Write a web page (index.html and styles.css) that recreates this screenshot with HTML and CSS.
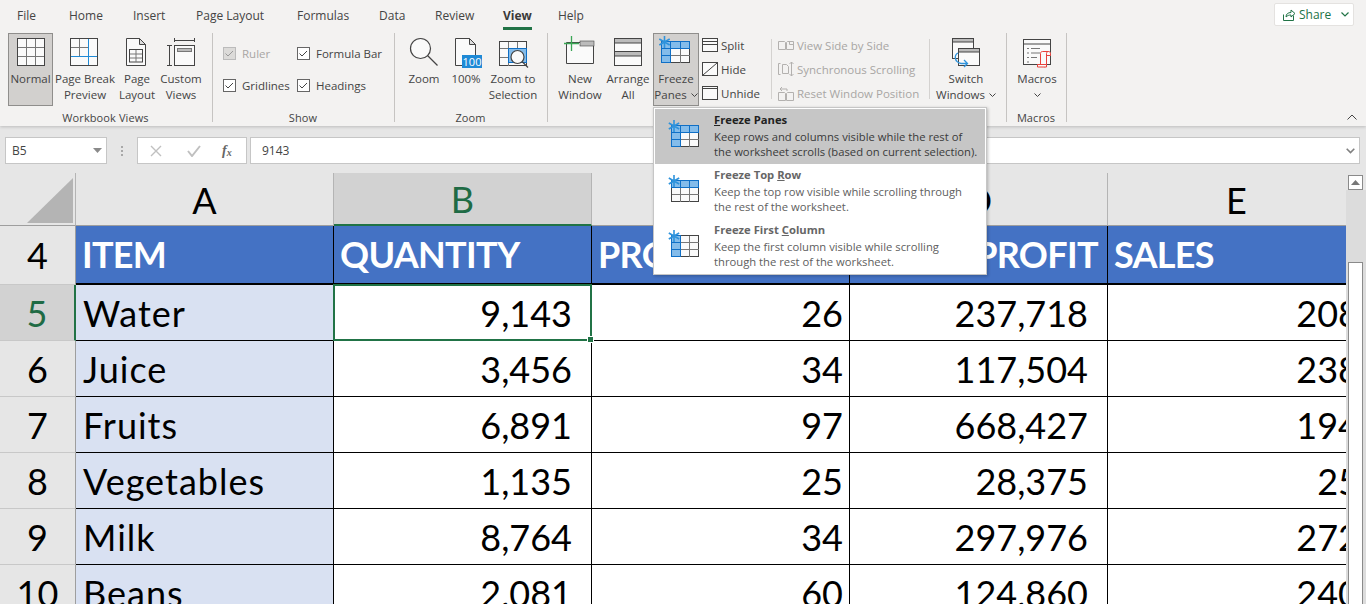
FILE: index.html
```html
<!DOCTYPE html>
<html lang="en">
<head>
<meta charset="utf-8">
<title>Freeze Panes</title>
<link rel="stylesheet" href="styles.css">
</head>
<body>
<div class="app">
  <header class="ribbon">
    <nav class="tabs">
      <span class="tab">File</span>
      <span class="tab">Home</span>
      <span class="tab">Insert</span>
      <span class="tab">Page Layout</span>
      <span class="tab">Formulas</span>
      <span class="tab">Data</span>
      <span class="tab">Review</span>
      <span class="tab tab-active">View</span>
      <span class="tab">Help</span>
      <div class="share">
        <svg width="16" height="16" viewBox="0 0 16 16" class="share-icon"><path d="M2.500 7.500v6h10v-5M5 10c0-3 2-4.500 5-4.500V3l4 3.500-4 3.500V8c-2 0-3.500.5-5 2z" fill="none" stroke="#217346"/></svg>
        <span>Share</span>
        <svg class="share-chev" width="8" height="5" viewBox="0 0 8 5"><path d="M.5.500 4 4 7.500.500" fill="none" stroke="#217346" stroke-width="1.200"/></svg>
      </div>
    </nav>
    <div class="groups">
      <section class="group g-views">
        <div class="body">
          <div class="btn b45 active">
            <svg width="40" height="38" viewBox="0 0 40 38"><rect x="6.500" y="5.500" width="27" height="27" fill="#fafafa" stroke="#444"/><path d="M15.500 6v26M24.500 6v26M7 14.500h26M7 23.500h26" stroke="#777"/></svg>
            <span class="lbl">Normal</span>
          </div>
          <div class="btn b60 m2">
            <svg width="40" height="38" viewBox="0 0 40 38"><rect x="5.500" y="5.500" width="27" height="27" fill="#fafafa" stroke="#444"/><path d="M14.500 6v17M6 14.500h17" stroke="#777"/><path d="M23.500 6v26M6 23.500h26" stroke="#1f8ad6"/></svg>
            <span class="lbl">Page Break<br>Preview</span>
          </div>
          <div class="btn b40 m2">
            <svg width="40" height="38" viewBox="0 0 40 38"><path d="M9.500 5.500h13l6 6v21h-19z" fill="#fafafa" stroke="#444"/><path d="M22.500 5.500v6h6z" fill="#ddd" stroke="#444"/><rect x="12.500" y="16.500" width="13" height="12.500" fill="#fafafa" stroke="#444"/><path d="M19 17v12M13 21h12M13 25h12" stroke="#777"/></svg>
            <span class="lbl">Page<br>Layout</span>
          </div>
          <div class="btn b44 m2">
            <svg width="40" height="38" viewBox="0 0 40 38"><rect x="13.500" y="12.500" width="20" height="20" fill="#fafafa" stroke="#444"/><rect x="16.500" y="15.500" width="14" height="3" fill="#bbb" stroke="#777"/><path d="M13.500 5v4M33.500 5v4M13.500 7.500h20M6 12.500h5M6 32.500h5M8.500 12.500v20" fill="none" stroke="#444"/></svg>
            <span class="lbl">Custom<br>Views</span>
          </div>
        </div>
        <div class="glabel glabel-views">Workbook Views</div>
      </section>

      <section class="group g-show">
        <div class="body checks">
          <label class="check off"><i class="box"><svg width="9" height="7" viewBox="0 0 9 7"><path d="M.5 3.500l2.500 2.500 5-5" fill="none" stroke="currentColor"/></svg></i>Ruler</label>
          <label class="check"><i class="box"><svg width="9" height="7" viewBox="0 0 9 7"><path d="M.5 3.500l2.500 2.500 5-5" fill="none" stroke="currentColor"/></svg></i>Formula Bar</label>
          <label class="check"><i class="box"><svg width="9" height="7" viewBox="0 0 9 7"><path d="M.5 3.500l2.500 2.500 5-5" fill="none" stroke="currentColor"/></svg></i>Gridlines</label>
          <label class="check"><i class="box"><svg width="9" height="7" viewBox="0 0 9 7"><path d="M.5 3.500l2.500 2.500 5-5" fill="none" stroke="currentColor"/></svg></i>Headings</label>
        </div>
        <div class="glabel">Show</div>
      </section>

      <section class="group g-zoom">
        <div class="body">
          <div class="btn b44 ms7">
            <svg width="40" height="38" viewBox="0 0 40 38"><circle cx="16.500" cy="15.500" r="10" fill="#fafafa" stroke="#444" stroke-width="1.200"/><path d="M23.500 22.500l10 10" stroke="#444" stroke-width="1.200"/></svg>
            <span class="lbl">Zoom</span>
          </div>
          <div class="btn b36 m2">
            <svg width="40" height="38" viewBox="0 0 40 38"><path d="M9.500 5.500h14l6 6v21h-20z" fill="#fafafa" stroke="#444"/><path d="M23.500 5.500v6h6z" fill="#ddd" stroke="#444"/><rect x="16" y="22" width="20" height="13" fill="#1f8ad6"/><text x="26" y="33" class="t100">100</text></svg>
            <span class="lbl">100%</span>
          </div>
          <div class="btn b58">
            <svg width="40" height="38" viewBox="0 0 40 38"><rect x="6.500" y="8.500" width="27" height="24" fill="#fafafa" stroke="#444"/><path d="M15.500 9v24M24.500 9v7M7 15.500h26M7 24.500h9" stroke="#777"/><rect x="15.500" y="15.500" width="18" height="14" fill="#84bcea" stroke="#0f6fc6"/><circle cx="24.500" cy="24" r="6.500" fill="#fafafa" stroke="#444" stroke-width="1.200"/><path d="M29 28.500l6 6" stroke="#444" stroke-width="1.200"/></svg>
            <span class="lbl">Zoom to<br>Selection</span>
          </div>
        </div>
        <div class="glabel">Zoom</div>
      </section>

      <section class="group g-window">
        <div class="body">
          <div class="btn b50 ms7">
            <svg width="40" height="38" viewBox="0 0 40 38"><path d="M6.500 9.500h27v21h-27z" fill="#fafafa" stroke="#444"/><rect x="20" y="8" width="14" height="5" fill="#bbb" stroke="#444" stroke-width=".6"/><path d="M4 10.500h15M11.500 3v15" stroke="#3aa655" stroke-width="1.300"/></svg>
            <span class="lbl">New<br>Window</span>
          </div>
          <div class="btn b46">
            <svg width="40" height="38" viewBox="0 0 40 38"><rect x="6.500" y="5.500" width="27" height="13" fill="#fafafa" stroke="#444"/><rect x="6.500" y="5.500" width="27" height="4.500" fill="#bbb" stroke="#444"/><rect x="6.500" y="18.500" width="27" height="14" fill="#fafafa" stroke="#444"/><rect x="6.500" y="18.500" width="27" height="4.500" fill="#bbb" stroke="#444"/></svg>
            <span class="lbl">Arrange<br>All</span>
          </div>
          <div class="btn b46 active m2">
            <svg width="40" height="38" viewBox="0 0 40 38">
              <rect x="5.500" y="8.500" width="28" height="21" fill="#fafafa" stroke="#444"/>
              <rect x="5.500" y="8.500" width="28" height="7" fill="#84bcea"/><rect x="5.500" y="15.500" width="9" height="14" fill="#84bcea"/>
              <path d="M24.500 16v14M15 22.500h19" stroke="#777"/><path d="M14.500 9v21M24.500 9v7M6 15.500h28M6 22.500h9" stroke="#0f6fc6"/><path d="M5.500 30v-21.500h28v7M5.500 29.500h9" fill="none" stroke="#0f6fc6"/>
              <path d="M8.500 3v12M3.300 6l10.400 6M3.300 12l10.400-6" stroke="#2e93dc" stroke-width="1.600"/>
            </svg>
            <span class="lbl">Freeze<br>Panes <svg class="chev" width="7" height="4" viewBox="0 0 7 4"><path d="M.5.500l3 3 3-3" fill="none" stroke="#444"/></svg></span>
          </div>
          <div class="minis">
            <div class="mini"><svg width="16" height="14" viewBox="0 0 16 14"><rect x=".5" y=".5" width="15" height="13" fill="#fafafa" stroke="#444"/><path d="M0 3.500h16M0 6.500h16" stroke="#444"/></svg>Split</div>
            <div class="mini"><svg width="16" height="14" viewBox="0 0 16 14"><rect x=".5" y=".5" width="15" height="13" fill="#fafafa" stroke="#444"/><path d="M1 13L15 1" stroke="#444"/></svg>Hide</div>
            <div class="mini"><svg width="16" height="14" viewBox="0 0 16 14"><rect x=".5" y=".5" width="15" height="13" fill="#fafafa" stroke="#444"/><path d="M0 2.500h16" stroke="#444"/></svg>Unhide</div>
          </div>
          <div class="vsep"></div>
          <div class="minis dis">
            <div class="mini"><svg width="16" height="14" viewBox="0 0 16 14"><path d="M.5 3.500h6l1 1v7h-7zM8.500 4.500l1-1h6v8h-7zM11.500 3.500v3h4" fill="#f3f2f1" stroke="#b3b1af"/></svg>View Side by Side</div>
            <div class="mini"><svg width="16" height="14" viewBox="0 0 16 14"><path d="M2.500 1.500h-2v11h2M4.500 2.500h4l2 2v7h-6zM13.500 0v14M11.500 2l2-2 2 2M11.500 12l2 2 2-2" fill="none" stroke="#b3b1af"/></svg>Synchronous Scrolling</div>
            <div class="mini"><svg width="16" height="16" viewBox="0 0 16 16"><path d="M.5 7.500h6l1 1v7h-7zM8.500 8.500l1-1h6v8h-7zM2 4h7v2M2 4l2-2M2 4l2 2" fill="none" stroke="#b3b1af"/></svg>Reset Window Position</div>
          </div>
          <div class="vsep"></div>
          <div class="btn b60 ml">
            <svg width="40" height="38" viewBox="0 0 40 38"><rect x="6.500" y="5.500" width="21" height="20" fill="#fafafa" stroke="#444"/><rect x="6.500" y="5.500" width="21" height="3.500" fill="#bbb" stroke="#444"/><rect x="12.500" y="15.500" width="21" height="17" fill="#fafafa" stroke="#444"/><rect x="12.500" y="15.500" width="21" height="3.500" fill="#bbb" stroke="#444"/><path d="M12 20c-4 2-4 9 3 10.500h6M18 27l3.500 3.500L18 34" fill="none" stroke="#2e93dc" stroke-width="1.300"/></svg>
            <span class="lbl">Switch<br>Windows <svg class="chev" width="7" height="4" viewBox="0 0 7 4"><path d="M.5.500l3 3 3-3" fill="none" stroke="#444"/></svg></span>
          </div>
        </div>
        <div class="glabel">Window</div>
      </section>

      <section class="group g-macros">
        <div class="body">
          <div class="btn b44 ms8">
            <svg width="40" height="38" viewBox="0 0 40 38"><rect x="6.500" y="6.500" width="27" height="25" fill="#fafafa" stroke="#444"/><path d="M7 11h27" stroke="#444"/><path d="M10 15.500h2M14 15.500h9M10 20h2M14 20h9M10 24.500h2M14 24.500h6M10 29h2" stroke="#777"/><path d="M23.500 31.500v-11c0-1.200.8-2 2-2h6c1.200 0 2 .8 2 2v2h-4M31.500 18.500c-1.200 0-2 .8-2 2v10.500c0 1.500-.8 3-2 3" fill="#fafafa" stroke="#e8403a"/><path d="M20.500 31.500h9v2.500h-9z" fill="#fafafa" stroke="#e8403a"/></svg>
            <span class="lbl">Macros<br><svg class="chev" width="7" height="4" viewBox="0 0 7 4"><path d="M.5.500l3 3 3-3" fill="none" stroke="#444"/></svg></span>
          </div>
        </div>
        <div class="glabel">Macros</div>
      </section>
      <svg class="collapse" width="10" height="6" viewBox="0 0 10 6"><path d="M.5 5.500L5 1l4.500 4.500" fill="none" stroke="#444"/></svg>
    </div>
  </header>

  <div class="formula">
    <div class="namebox"><span>B5</span><svg width="9" height="5" viewBox="0 0 9 5"><path d="M0 0h9L4.500 5z" fill="#8a8a8a"/></svg></div>
    <div class="dots"><i></i><i></i><i></i></div>
    <div class="fxbox">
      <svg width="12" height="12" viewBox="0 0 12 12"><path d="M1 1l10 10M11 1L1 11" stroke="#c0c0c0" stroke-width="1.400"/></svg>
      <svg width="14" height="12" viewBox="0 0 14 12"><path d="M1 6l4 5 8-10" fill="none" stroke="#c0c0c0" stroke-width="2"/></svg>
      <span class="fx">f<sub>x</sub></span>
    </div>
    <div class="input"><span>9143</span><svg width="9" height="6" viewBox="0 0 9 6"><path d="M.7.700l3.800 3.800L8.300.700" fill="none" stroke="#808080" stroke-width="1.600"/></svg></div>
  </div>

  <main class="sheet">
    <div class="grid">
      <div class="corner"><svg width="46" height="45" viewBox="0 0 46 45"><path d="M46 0v45H0z" fill="#b4b4b4"/></svg></div>
      <div class="ch">A</div><div class="ch ch-sel">B</div><div class="ch">C</div><div class="ch">D</div><div class="ch">E</div>

      <div class="rh rh-top">4</div>
      <div class="c h">ITEM</div><div class="c h">QUANTITY</div><div class="c h">PROFIT</div><div class="c h">TOTAL PROFIT</div><div class="c h">SALES</div>

      <div class="rh rh-sel">5</div>
      <div class="c a">Water</div><div class="c n sel">9,143</div><div class="c n e">26</div><div class="c n">237,718</div><div class="c n e">208</div>

      <div class="rh">6</div>
      <div class="c a">Juice</div><div class="c n">3,456</div><div class="c n e">34</div><div class="c n">117,504</div><div class="c n e">238</div>

      <div class="rh">7</div>
      <div class="c a">Fruits</div><div class="c n">6,891</div><div class="c n e">97</div><div class="c n">668,427</div><div class="c n e">194</div>

      <div class="rh">8</div>
      <div class="c a">Vegetables</div><div class="c n">1,135</div><div class="c n e">25</div><div class="c n">28,375</div><div class="c n e">25</div>

      <div class="rh">9</div>
      <div class="c a">Milk</div><div class="c n">8,764</div><div class="c n e">34</div><div class="c n">297,976</div><div class="c n e">272</div>

      <div class="rh">10</div>
      <div class="c a">Beans</div><div class="c n">2,081</div><div class="c n e">60</div><div class="c n">124,860</div><div class="c n e">240</div>
    </div>
    <aside class="vscroll">
      <div class="sb-up"><svg width="9" height="5" viewBox="0 0 9 5"><path d="M4.500 0L9 5H0z" fill="#777"/></svg></div>
      <div class="sb-track"><div class="sb-thumb"></div></div>
    </aside>
  </main>

  <div class="menu">
    <div class="mi mi-on">
      <svg width="44" height="32" viewBox="0 0 44 32"><rect x="11.500" y="8.500" width="27" height="21" fill="#fafafa" stroke="#444"/><rect x="11.500" y="8.500" width="27" height="7" fill="#84bcea"/><rect x="11.500" y="15.500" width="9" height="14" fill="#84bcea"/><path d="M29.500 16v14M21 22.500h18" stroke="#777"/><path d="M20.500 9v21M29.500 9v7M12 15.500h27M12 22.500h9" stroke="#0f6fc6"/><path d="M11.500 30V8.500h27v7M11.500 29.500h9" fill="none" stroke="#0f6fc6"/><path d="M14 3v12M8.800 6l10.400 6M8.800 12l10.400-6" stroke="#2e93dc" stroke-width="1.600"/></svg>
      <div class="mt"><b><u>F</u>reeze Panes</b><span>Keep rows and columns visible while the rest of<br>the worksheet scrolls (based on current selection).</span></div>
    </div>
    <div class="mi">
      <svg width="44" height="32" viewBox="0 0 44 32"><rect x="11.500" y="8.500" width="27" height="21" fill="#fafafa" stroke="#444"/><rect x="11.500" y="8.500" width="27" height="7" fill="#84bcea" stroke="#0f6fc6"/><path d="M20.500 9v7M29.500 9v7" stroke="#0f6fc6"/><path d="M20.500 16v14M29.500 16v14M12 22.500h27" stroke="#777"/><path d="M14 3v12M8.800 6l10.400 6M8.800 12l10.400-6" stroke="#2e93dc" stroke-width="1.600"/></svg>
      <div class="mt"><b>Freeze Top <u>R</u>ow</b><span>Keep the top row visible while scrolling through<br>the rest of the worksheet.</span></div>
    </div>
    <div class="mi">
      <svg width="44" height="32" viewBox="0 0 44 32"><rect x="11.500" y="8.500" width="27" height="21" fill="#fafafa" stroke="#444"/><rect x="11.500" y="8.500" width="9" height="21" fill="#84bcea" stroke="#0f6fc6"/><path d="M12 15.500h8M12 22.500h8" stroke="#0f6fc6"/><path d="M29.500 9v21M21 15.500h18M21 22.500h18" stroke="#777"/><path d="M14 3v12M8.800 6l10.400 6M8.800 12l10.400-6" stroke="#2e93dc" stroke-width="1.600"/></svg>
      <div class="mt"><b>Freeze First <u>C</u>olumn</b><span>Keep the first column visible while scrolling<br>through the rest of the worksheet.</span></div>
    </div>
  </div>
</div>
</body>
</html>
```
FILE: styles.css
```css
* { box-sizing: border-box; }
html, body { margin: 0; height: 100%; overflow: hidden; }
body { font-family: "Open Sans", "Noto Sans", sans-serif; color: #444; background: #e6e6e6; }
.app { position: relative; width: 1366px; height: 604px; overflow: hidden; display: flex; flex-direction: column; }

/* ribbon */
.ribbon { height: 126px; background: #f3f2f1; box-shadow: 0 1px 3px rgba(0,0,0,.18); flex: none; position: relative; z-index: 1; }
.tabs { display: grid; grid-template-columns: 52px 64px 63px 101px 82px 56px 68px 55px 1fr auto; align-items: center; height: 30px; font-size: 12px; padding-left: 17px; }
.tab { position: relative; white-space: nowrap; justify-self: start; }
.tab-active { font-weight: 700; color: #3a3a3a; }
.tab-active::after { content: ""; position: absolute; left: 0; right: 0; top: 20px; height: 3px; background: #217346; }
.share { margin-right: 12px; width: 80px; height: 23px; background: #fff; border: 1px solid #e4e2e0; border-radius: 2px; display: flex; align-items: center; color: #217346; font-size: 12px; padding-left: 6px; margin-top: -1px; }
.share-icon { margin-right: 2px; }
.share-chev { margin-left: auto; margin-right: 4px; }

.groups { display: flex; height: 93px; padding: 3px 0 0 8px; position: relative; }
.group { display: flex; flex-direction: column; height: 89px; border-right: 1px solid #c6c4c2; flex: none; }
.g-views { width: 205px; }
.g-show { width: 182px; }
.g-zoom { width: 153px; }
.g-window { width: 459px; }
.g-macros { width: 60px; }
.body { display: flex; height: 73px; flex: none; }
.glabel { font-size: 11px; line-height: 16px; text-align: center; margin-top: 4px; padding-right: 1px; letter-spacing: .1px; }
.glabel-views { padding-right: 9px; }

.btn { display: flex; flex-direction: column; align-items: center; height: 73px; flex: none; font-size: 11.500px; border: 1px solid transparent; }
.btn svg:first-child { flex: none; margin-top: -1px; }
.btn.active { background: #d2d0ce; border-color: #8f8e8c; }
.lbl { display: block; line-height: 16px; text-align: center; white-space: nowrap; }
.b36 { width: 36px; } .b40 { width: 40px; } .b44 { width: 44px; } .b45 { width: 45px; } .b46 { width: 46px; } .b50 { width: 50px; } .b58 { width: 58px; } .b60 { width: 60px; }
.m2 { margin-left: 2px; }
.ms7 { margin-left: 7px; } .ms8 { margin-left: 8px; }
.ml { margin-left: 6px; }
.chev { vertical-align: 2px; margin-left: 1px; }

.checks { display: grid; grid-template-columns: 74px 1fr; grid-template-rows: 32px 32px; padding: 9px 0 0 10px; }
.check { display: flex; align-items: center; font-size: 11.500px; gap: 6px; height: 22px; white-space: nowrap; }
.box { width: 13px; height: 13px; background: #fff; border: 1px solid #666; display: flex; align-items: center; justify-content: center; color: #444; flex: none; }
.check.off { color: #a8a6a4; }
.check.off .box { background: #dcdbd9; border-color: #bbb; color: #999; }

.minis { display: flex; flex-direction: column; padding-left: 3px; width: 72px; flex: none; }
.mini { display: flex; align-items: center; gap: 3px; height: 24px; font-size: 11.500px; white-space: nowrap; flex: none; }
.minis.dis { width: 157px; padding-left: 6px; color: #a8a6a4; }
.vsep { width: 1px; height: 60px; margin-top: 6px; background: #d4d2d0; flex: none; }

/* formula bar */
.formula { height: 47px; padding: 11px 6px 9px 5px; display: flex; align-items: stretch; flex: none; background: #e6e6e6; font-size: 12px; }
.namebox { width: 102px; background: #fff; border: 1px solid #c6c6c6; display: flex; align-items: center; justify-content: space-between; padding: 0 4px 0 6px; }
.dots { width: 30px; display: flex; flex-direction: column; gap: 2px; align-items: center; justify-content: center; }
.dots i { width: 2px; height: 2px; background: #a8a8a8; }
.fxbox { width: 110px; background: #fff; border: 1px solid #c6c6c6; display: flex; align-items: center; padding-left: 12px; gap: 25px; margin-right: 3px; }
.fx { font-family: "Liberation Serif", serif; font-style: italic; font-weight: 700; font-size: 14px; color: #666; margin-left: -4px; }
.fx sub { font-size: 10px; vertical-align: -1px; line-height: 0; }
.input { flex: 1; background: #fff; border: 1px solid #c6c6c6; display: flex; align-items: center; justify-content: space-between; padding: 0 4px 0 11px; }

/* sheet */
.sheet { flex: 1; display: flex; min-height: 0; }
.grid { width: 1346px; overflow: hidden; display: grid; grid-template-columns: 76px 258px 258px 258px 258px 258px; grid-template-rows: 53px 59px repeat(6, 56px); font-family: Lato, "Open Sans", sans-serif; font-size: 36px; color: #000; flex: none; }
.corner { background: #e6e6e6; border-right: 1px solid #b4b4b4; padding: 5px 0 0 27px; border-bottom: 1px solid #9e9e9e; }
.corner svg { display: block; }
.ch { background: #e6e6e6; border-right: 1px solid #b4b4b4; border-bottom: 1px solid #9e9e9e; display: flex; align-items: flex-end; justify-content: center; line-height: 50px; }
.ch-sel { background: #d2d2d2; color: #1f6b45; border-bottom: 2px solid #217346; }
.rh { background: #e6e6e6; border-right: 1px solid #9e9e9e; border-bottom: 1px solid #c8c8c8; display: flex; align-items: center; justify-content: center; }
.rh-sel { background: #d2d2d2; color: #1f6b45; border-right: 2px solid #217346; }
.c { border-right: 1px solid #000; border-bottom: 1px solid #000; display: flex; align-items: center; padding: 0 6px; background: #fff; white-space: nowrap; }
.h { background: #4472c4; color: #fff; font-weight: 700; border-bottom-width: 2px; letter-spacing: -.7px; word-spacing: 4px; padding-bottom: 2px; }
.a { background: #d9e1f2; letter-spacing: 1px; padding-left: 7px; }
.n { justify-content: flex-end; padding-right: 19px; }
.c.e { padding-right: 6px; }
.sel { position: relative; }
.sel::after { content: ""; position: absolute; left: -1px; top: -1px; right: -1px; bottom: -1px; border: 2px solid #217346; }
.sel::before { content: ""; position: absolute; right: -3px; bottom: -3px; width: 5px; height: 5px; background: #217346; border: 1px solid #fff; z-index: 1; }

.vscroll { width: 20px; background: #e6e6e6; padding-top: 2px; display: flex; flex-direction: column; align-items: stretch; }
.sb-up { width: 15px; height: 15px; margin-left: 2px; background: #fff; border: 1px solid #8a8a8a; display: flex; align-items: center; justify-content: center; flex: none; }
.sb-track { flex: 1; background: #dcdcdc; padding: 72px 3px 0 2px; }
.sb-thumb { height: 400px; background: #fff; border: 1px solid #8a8a8a; }

/* freeze panes menu */
.menu { position: absolute; left: 653px; top: 107px; width: 334px; height: 168px; background: #fff; border: 1px solid #c6c6c6; box-shadow: 1px 1px 3px rgba(0,0,0,.25); z-index: 5; padding: 1px 1px 0; }
.mi { display: flex; height: 55px; }
.mi svg { flex: none; margin: 8px 10px 0 5px; }
.mi-on { background: #c6c6c6; }
.mt { font-size: 11.250px; line-height: 15px; color: #606060; padding-top: 2px; white-space: nowrap; }
.mt b { display: block; color: #666; line-height: 17px; margin-bottom: 1px; }
.mt span { display: block; }
.mi-on .mt { color: #3a3a3a; }
.mi-on .mt b { color: #222; }
.collapse { position: absolute; right: 9px; top: 84px; }
.t100 { font-family: "Open Sans", sans-serif; font-size: 11px; fill: #fff; text-anchor: middle; }
```
